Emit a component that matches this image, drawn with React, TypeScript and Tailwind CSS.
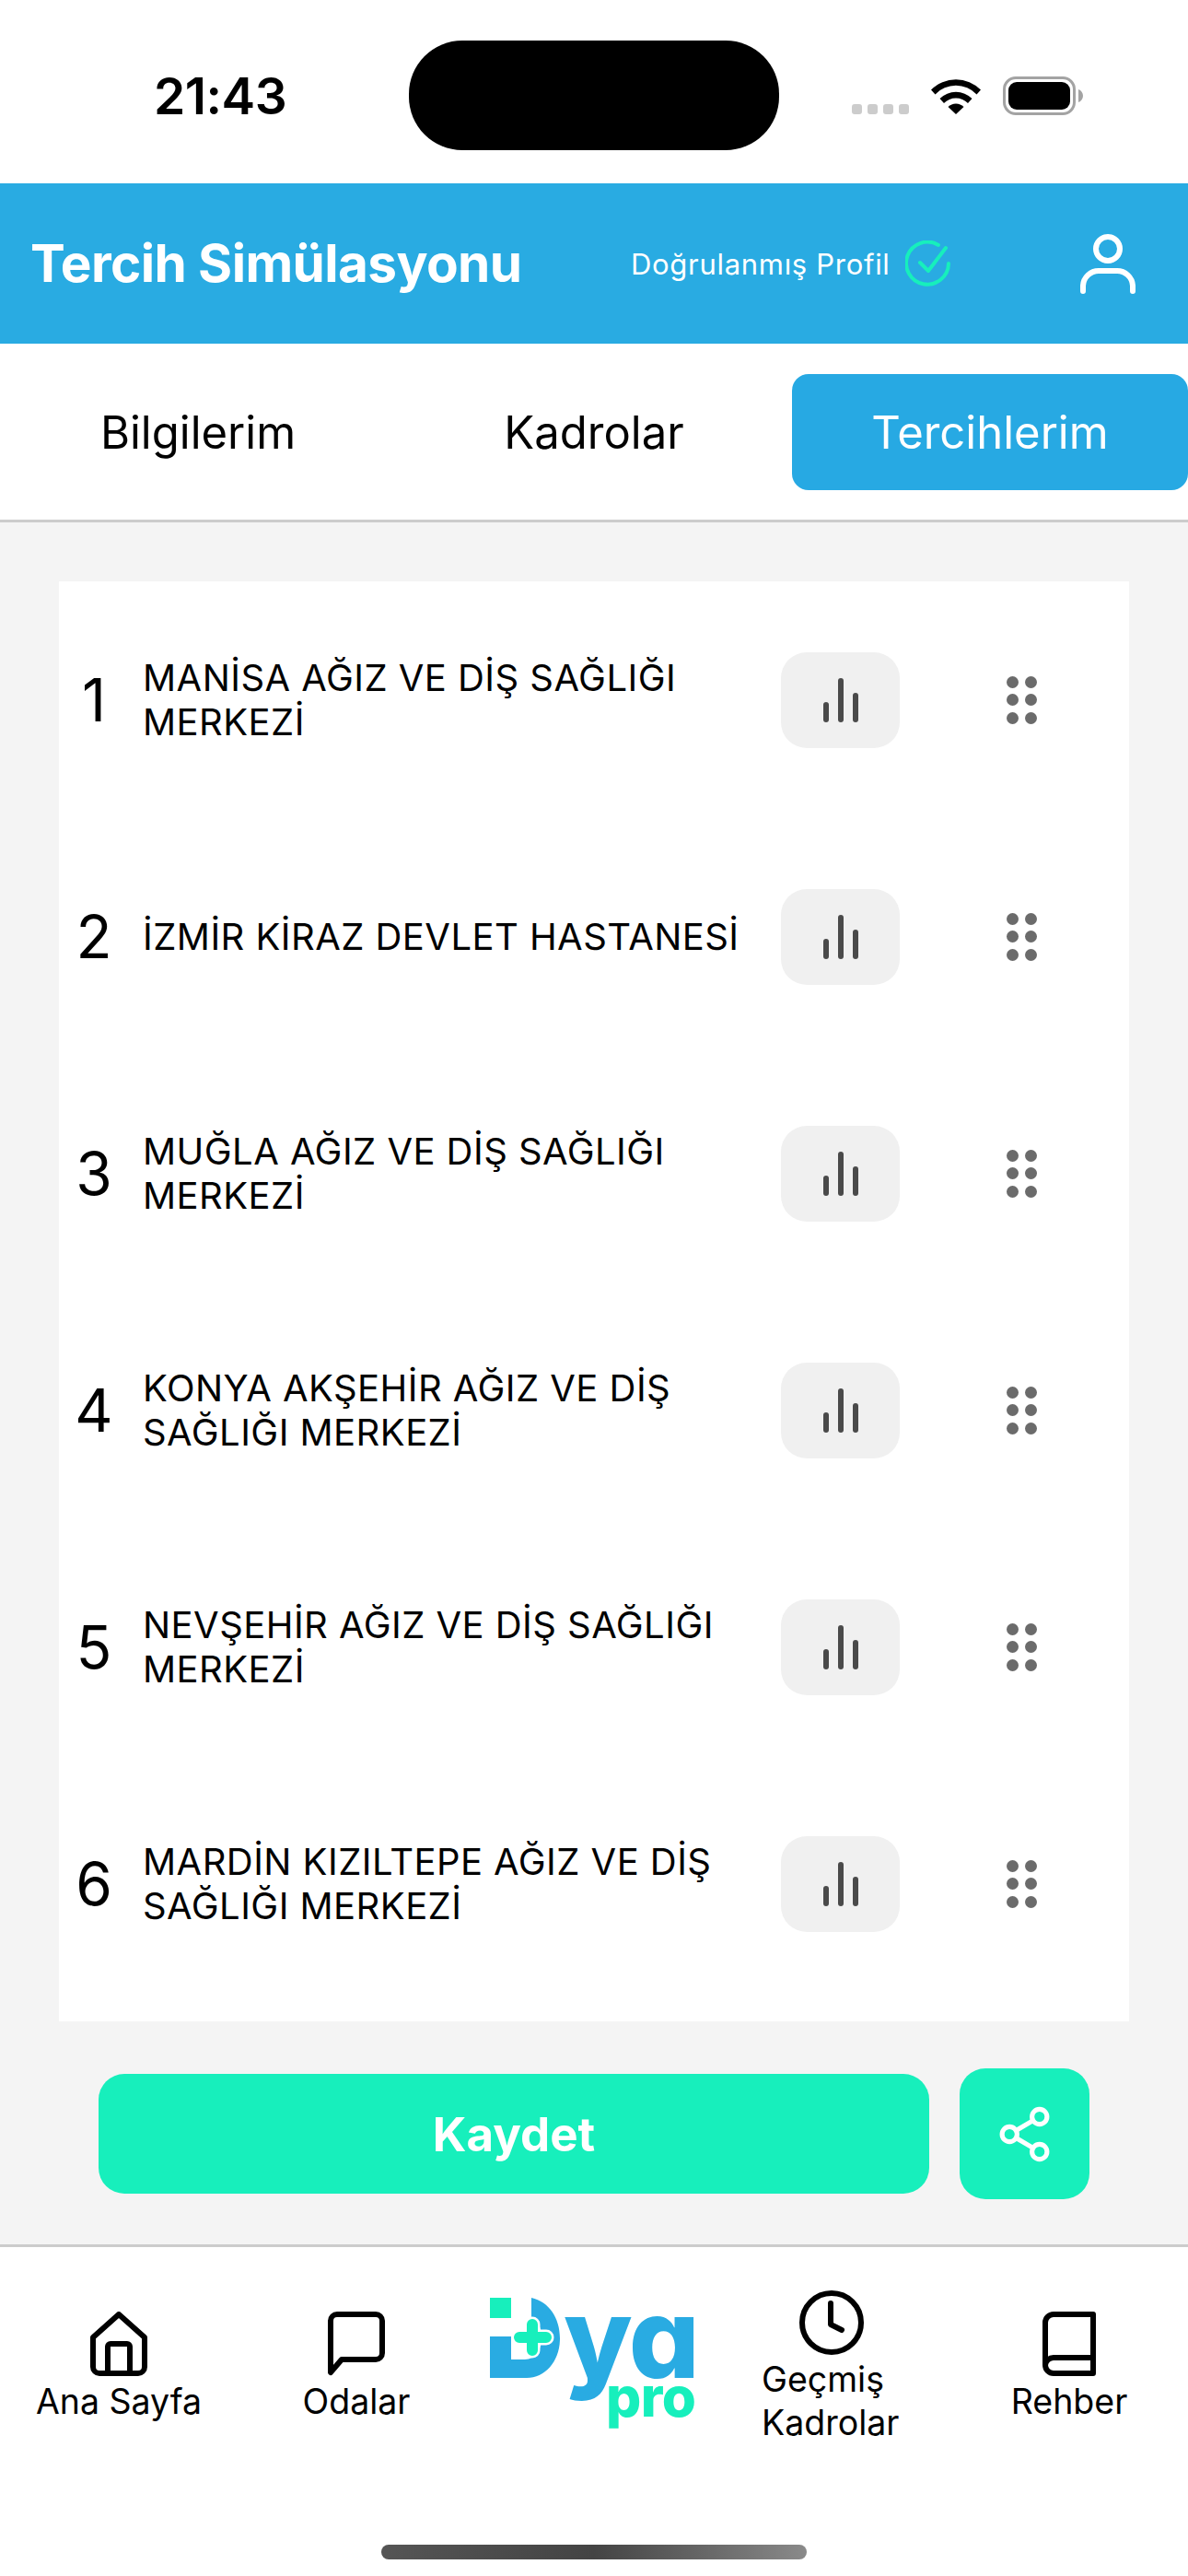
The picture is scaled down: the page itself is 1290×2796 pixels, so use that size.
const font = "font-['Inter','Liberation_Sans',sans-serif]";

const preferences = [
  "MANİSA AĞIZ VE DİŞ SAĞLIĞI MERKEZİ",
  "İZMİR KİRAZ DEVLET HASTANESİ",
  "MUĞLA AĞIZ VE DİŞ SAĞLIĞI MERKEZİ",
  "KONYA AKŞEHİR AĞIZ VE DİŞ SAĞLIĞI MERKEZİ",
  "NEVŞEHİR AĞIZ VE DİŞ SAĞLIĞI MERKEZİ",
  "MARDİN KIZILTEPE AĞIZ VE DİŞ SAĞLIĞI MERKEZİ",
];

function StatusBar() {
  return (
    <div className="flex h-[199px] items-start bg-white">
      <div className="ml-[167px] mt-[77px] w-[277px] text-[55px] leading-[55px] font-semibold tracking-[-0.5px] text-black">
        21:43
      </div>
      <div className="mt-[44px] h-[119px] w-[402px] rounded-[58px] bg-black" />
      <div className="ml-[79px] mt-[113px] flex gap-[6px]">
        <span className="h-[11px] w-[11px] rounded-[3px] bg-[#cccccc]" />
        <span className="h-[11px] w-[11px] rounded-[3px] bg-[#cccccc]" />
        <span className="h-[11px] w-[11px] rounded-[3px] bg-[#cccccc]" />
        <span className="h-[11px] w-[11px] rounded-[3px] bg-[#cccccc]" />
      </div>
      <svg className="ml-[24px] mt-[84px]" width="54" height="40" viewBox="0 0 54 40">
        <path d="M0 13.500 A38 38 0 0 1 54 13.500 L49.500 18.500 A31 31 0 0 0 4.500 18.500 Z" fill="#000" />
        <path d="M9.500 23 A25 25 0 0 1 44.500 23 L40 28 A18 18 0 0 0 14 28 Z" fill="#000" />
        <path d="M18.500 32 A12 12 0 0 1 35.500 32 L27 40 Z" fill="#000" />
      </svg>
      <div className="ml-[24px] mt-[83px] flex items-center">
        <div className="h-[42px] w-[79px] rounded-[14px] border-[3px] border-[#a3a3a3] p-[3px]">
          <div className="h-full w-full rounded-[9px] bg-black" />
        </div>
        <svg className="ml-[3px]" width="5" height="14" viewBox="0 0 5 14">
          <path d="M0 0 C3 1 5 4 5 7 C5 10 3 13 0 14 Z" fill="#a3a3a3" />
        </svg>
      </div>
    </div>
  );
}

function Header() {
  return (
    <div className="flex h-[174px] items-center bg-[#29abe2] pl-[33px] pr-[56px] text-white">
      <div className="w-[652px] text-[56.700px] leading-none font-bold tracking-[-0.6px]">Tercih Simülasyonu</div>
      <div className="text-[31px] leading-none tracking-[0.7px]">Doğrulanmış Profil</div>
      <svg className="ml-[16px]" width="50" height="50" viewBox="0 0 50 50" fill="none" stroke="#17efbc" strokeWidth="4" strokeLinecap="round" strokeLinejoin="round">
        <path d="M47 25 A23 23 0 1 1 36 5" />
        <path d="M16 24 L25 33 L44 8" />
      </svg>
      <svg className="ml-auto" width="62" height="66" viewBox="0 0 62 66" fill="none" stroke="#fff" strokeWidth="6" strokeLinecap="round">
        <circle cx="31" cy="17" r="13" />
        <path d="M4 63 V57 A17 17 0 0 1 21 41 H41 A17 17 0 0 1 58 57 V63" />
      </svg>
    </div>
  );
}

function Tabs() {
  return (
    <div className="grid grid-cols-3 border-b-[3px] border-[#cccccc] bg-white pb-[32px] pt-[33px] text-[49px] leading-none">
      <div className="flex h-[126px] items-center justify-center text-black">Bilgilerim</div>
      <div className="flex h-[126px] items-center justify-center text-black">Kadrolar</div>
      <div className="flex h-[126px] items-center justify-center rounded-[18px] bg-[#27a9e3] text-white">Tercihlerim</div>
    </div>
  );
}

function PreferenceRow({ index, name }: { index: number; name: string }) {
  return (
    <div className="flex h-[257px] items-center">
      <div className="w-[91px] pr-[15px] text-center text-[64px] leading-none text-black">{index}</div>
      <div className="w-[693px] pr-[30px] text-[40px] leading-[48px] tracking-[0.45px] text-black">{name}</div>
      <div className="flex h-[104px] w-[129px] items-center justify-center rounded-[28px] bg-[#f0f0f0]">
        <div className="flex h-[48px] items-end gap-[10px]">
          <span className="h-[22px] w-[6px] rounded-full bg-[#4a4a4a]" />
          <span className="h-[48px] w-[6px] rounded-full bg-[#4a4a4a]" />
          <span className="h-[32px] w-[6px] rounded-full bg-[#4a4a4a]" />
        </div>
      </div>
      <div className="ml-[116px] grid w-[33px] grid-cols-2 gap-x-[7px] gap-y-[6.500px]">
        {[0, 1, 2, 3, 4, 5].map((dot) => (
          <span key={dot} className="h-[13px] w-[13px] rounded-full bg-[#6b6b6b]" />
        ))}
      </div>
    </div>
  );
}

function Logo() {
  return (
    <svg width="226" height="214" viewBox="32 0 226 214" className={font}>
      <rect x="32" y="36" width="23" height="22" fill="#17efbc" />
      <path d="M77 36 C96 40 108 58 108 80 C108 105 92 123 72 123 H32 V78 H55 V103 H70 C82 103 88 92 88 80 C88 68 84 60 77 58 Z" fill="#29abe2" />
      <path d="M78 65 V93 M64 79 H93" stroke="#fff" strokeWidth="17" strokeLinecap="round" />
      <path d="M78 65 V93 M64 79 H93" stroke="#17efbc" strokeWidth="12" strokeLinecap="round" />
      <text x="112" y="123" fontSize="121" fontWeight="800" fill="#29abe2" letterSpacing="-2" style={{ fontFeatureSettings: "'cv11'" }}>
        ya
      </text>
      <text x="158" y="165" fontSize="60" fontWeight="800" fill="#17efbc" letterSpacing="-0.500">
        pro
      </text>
    </svg>
  );
}

function BottomNav() {
  return (
    <div className="grid h-[252px] grid-cols-5 items-center bg-white text-[37.500px] leading-[47px] text-black">
      <div className="flex flex-col items-center pt-[8px]">
        <svg width="62" height="70" viewBox="0 0 62 70" fill="none" stroke="#000" strokeWidth="6" strokeLinejoin="round">
          <path d="M31 3 L59 28 V60 A7 7 0 0 1 52 67 H10 A7 7 0 0 1 3 60 V28 Z" />
          <path d="M19 67 V38 A3 3 0 0 1 22 35 H40 A3 3 0 0 1 43 38 V67" />
        </svg>
        <div className="mt-[4px]">Ana Sayfa</div>
      </div>
      <div className="flex flex-col items-center pt-[8px]">
        <svg width="64" height="70" viewBox="0 0 64 70" fill="none" stroke="#000" strokeWidth="6" strokeLinejoin="round">
          <path d="M4 10 A7 7 0 0 1 11 3 H53 A7 7 0 0 1 60 10 V45 A7 7 0 0 1 53 52 H16 L4 66 Z" />
        </svg>
        <div className="mt-[4px]">Odalar</div>
      </div>
      <div className="flex justify-center">
        <Logo />
      </div>
      <div className="flex flex-col items-center pt-[8px]">
        <svg width="72" height="72" viewBox="0 0 72 72" fill="none" stroke="#000" strokeWidth="6" strokeLinecap="round" strokeLinejoin="round">
          <circle cx="36" cy="36" r="32" />
          <path d="M35 15 V38 L47 44" />
        </svg>
        <div className="mt-[2px] w-[152px]">
          Geçmiş
          <br />
          Kadrolar
        </div>
      </div>
      <div className="flex flex-col items-center pt-[8px]">
        <svg width="58" height="70" viewBox="0 0 58 70" fill="none" stroke="#000" strokeWidth="6" strokeLinejoin="round">
          <path d="M55 3 H12 A9 9 0 0 0 3 12 V58 A9 9 0 0 0 12 67 H55 Z" />
          <path d="M3 58 A9 9 0 0 1 12 50 H55" />
        </svg>
        <div className="mt-[4px]">Rehber</div>
      </div>
    </div>
  );
}

export default function App() {
  return (
    <div className={`flex h-[2796px] w-[1290px] flex-col overflow-hidden bg-white ${font}`}>
      <StatusBar />
      <Header />
      <Tabs />
      <div className="flex flex-col border-b-[3px] border-[#cccccc] bg-[#f4f4f4] px-[64px] pb-[49px] pt-[64px]">
        <div className="bg-white pb-[21px]">
          {preferences.map((name, i) => (
            <PreferenceRow key={name} index={i + 1} name={name} />
          ))}
        </div>
        <div className="mt-[51px] flex items-center gap-[33px] pl-[43px]">
          <div className="flex h-[130px] w-[902px] items-center justify-center rounded-[28px] bg-[#17efbc] text-[51px] leading-none font-bold text-white">
            Kaydet
          </div>
          <div className="flex h-[142px] w-[141px] items-center justify-center rounded-[28px] bg-[#17efbc]">
            <svg width="65" height="65" viewBox="0 0 24 24" fill="none" stroke="#fff" strokeWidth="1.900" strokeLinecap="round" strokeLinejoin="round">
              <circle cx="18" cy="5" r="3" />
              <circle cx="6" cy="12" r="3" />
              <circle cx="18" cy="19" r="3" />
              <line x1="8.590" y1="13.510" x2="15.420" y2="17.490" />
              <line x1="15.410" y1="6.510" x2="8.590" y2="10.490" />
            </svg>
          </div>
        </div>
      </div>
      <BottomNav />
      <div className="mx-auto mt-[71px] h-[16px] w-[462px] rounded-full bg-gradient-to-r from-[#555555] via-[#444444] to-[#8a8a8a]" />
    </div>
  );
}
